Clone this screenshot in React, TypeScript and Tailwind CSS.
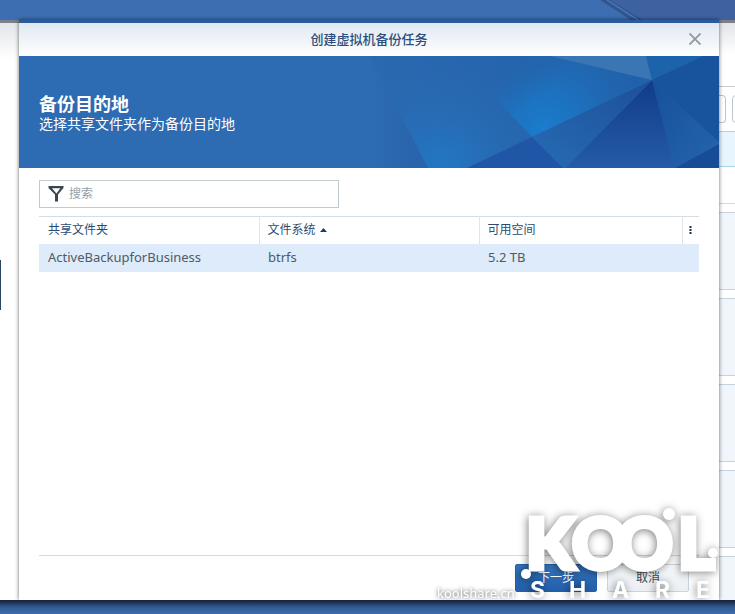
const folders = [{ name: 'ActiveBackupforBusiness', fs: 'btrfs', free: '5.2 TB' }]

const cards = [1, 2, 3, 4]

const DesktopBar: React.FC = () => {
    return (
        <div className="relative h-5 bg-[#3c6eb1]">
            <svg
                className="absolute top-0 right-0"
                width="135"
                height="20"
                viewBox="0 0 135 20"
                aria-hidden="true"
            >
                <path d="M10 0H135V20H43Z" fill="#3d629f" />
                <path d="M0 0H10L43 20H31Z" fill="#30558f" />
                <path d="M7 0L38 20" stroke="#4a74b0" strokeWidth="1.5" />
            </svg>
        </div>
    )
}

const SideWindow: React.FC = () => {
    return (
        <div className="flex w-4 shrink-0 flex-col overflow-hidden border-t-[3px] border-[#7b7f88] bg-white">
            <div className="h-16 border-b border-[#c9cdd1] bg-linear-to-b from-[#e2e5e9] via-white to-white" />
            <div className="mt-2 flex h-7 gap-[6px]">
                <div className="w-[7px] shrink-0 rounded-r-sm border border-l-0 border-[#bcc6cd]" />
                <div className="w-5 shrink-0 rounded-l-sm border border-[#bcc6cd]" />
            </div>
            <div className="mt-2 h-9 border-y border-[#abd5ee] bg-[#e6f5fe]" />
            <div className="h-[37px] border-b border-[#d5dade]" />
            <div className="flex flex-1 flex-col gap-2 pt-2">
                {cards.map((card) => (
                    <div key={card} className="h-[78px] border-y border-[#c6d3de] bg-[#f0f6fc]" />
                ))}
                <div className="flex-1 border-t border-[#c6d3de] bg-[#f0f6fc]" />
            </div>
        </div>
    )
}

const BannerArt: React.FC = () => {
    return (
        <svg
            className="absolute top-0 right-0"
            width="350"
            height="112"
            viewBox="0 0 350 112"
            aria-hidden="true"
        >
            <defs>
                <linearGradient id="base" x1="0" y1="0" x2="1" y2="0">
                    <stop offset="0" stopColor="#2a69b0" />
                    <stop offset="1" stopColor="#2061ab" />
                </linearGradient>
                <linearGradient id="edge" x1="0" y1="0" x2="1" y2="0">
                    <stop offset="0" stopColor="#2d6bb2" />
                    <stop offset="1" stopColor="#2863ab" />
                </linearGradient>
                <radialGradient id="corner" gradientUnits="userSpaceOnUse" cx="72" cy="112" r="110">
                    <stop offset="0" stopColor="#2278c4" />
                    <stop offset="1" stopColor="#2a69b0" stopOpacity="0" />
                </radialGradient>
                <radialGradient id="glow" gradientUnits="userSpaceOnUse" cx="175" cy="74" r="105">
                    <stop offset="0" stopColor="#1a7dcc" />
                    <stop offset="0.4" stopColor="#1c74c2" stopOpacity="0.8" />
                    <stop offset="1" stopColor="#2366ae" stopOpacity="0" />
                </radialGradient>
                <linearGradient id="glowFade" gradientUnits="userSpaceOnUse" x1="120" y1="25" x2="145" y2="60">
                    <stop offset="0" stopColor="#000" />
                    <stop offset="1" stopColor="#fff" />
                </linearGradient>
                <mask id="glowMask">
                    <rect width="350" height="112" fill="url(#glowFade)" />
                </mask>
                <linearGradient id="dark" x1="0" y1="0" x2="0" y2="1">
                    <stop offset="0" stopColor="#103c88" />
                    <stop offset="1" stopColor="#255ba8" />
                </linearGradient>
                <linearGradient id="fold" x1="0" y1="1" x2="1" y2="0">
                    <stop offset="0" stopColor="#266cb5" />
                    <stop offset="1" stopColor="#1d4f98" />
                </linearGradient>
                <linearGradient id="right" x1="0" y1="0" x2="1" y2="1">
                    <stop offset="0" stopColor="#17509a" />
                    <stop offset="1" stopColor="#2465ae" />
                </linearGradient>
            </defs>
            <path d="M0 0H1L59 112H0Z" fill="url(#edge)" />
            <path d="M1 0H181L283 24L163 81L98 112H59Z" fill="url(#base)" />
            <path d="M1 0H181L283 24L163 81L98 112H59Z" fill="url(#corner)" />
            <path d="M85 0H181L283 24L163 81Z" fill="url(#glow)" mask="url(#glowMask)" />
            <path d="M181 0H277L283 24Z" fill="#3a76b3" />
            <path d="M277 0H334L283 24Z" fill="#1c63ac" />
            <path d="M334 0H350V88L283 24Z" fill="#18549d" />
            <path d="M283 24L350 86V88L306 112Z" fill="url(#right)" />
            <path d="M350 88V112H306Z" fill="#164d96" />
            <path d="M283 24L306 112H196Z" fill="url(#dark)" />
            <path d="M283 24L196 112H194L163 81Z" fill="url(#fold)" />
            <path d="M163 81L194 112H98Z" fill="#1f57a6" />
        </svg>
    )
}

const FolderTable: React.FC = () => {
    return (
        <table className="mt-2 w-full table-fixed border-t border-[#d3dde3] text-left">
            <thead>
                <tr className="h-[27px] text-xs text-[#2b4c72]">
                    <th className="w-[220px] pl-[9px] font-normal">共享文件夹</th>
                    <th className="w-[220px] border-l border-[#dde5ea] pl-2 font-normal">
                        <span className="flex items-center gap-1">
                            文件系统
                            <svg width="7" height="4" viewBox="0 0 7 4" aria-hidden="true">
                                <path d="M3.5 0L7 4H0Z" fill="#1d3f66" />
                            </svg>
                        </span>
                    </th>
                    <th className="border-l border-[#dde5ea] pl-2 font-normal">可用空间</th>
                    <th className="w-[17px] border-l border-[#dde5ea]">
                        <button className="flex w-full justify-center" aria-label="列">
                            <svg width="3" height="8" viewBox="0 0 3 8" aria-hidden="true">
                                <path d="M0.5 0H2.5V2H0.5ZM0.5 3H2.5V5H0.5ZM0.5 6H2.5V8H0.5Z" fill="#1d2f45" />
                            </svg>
                        </button>
                    </th>
                </tr>
            </thead>
            <tbody>
                {folders.map((folder) => (
                    <tr key={folder.name} className="h-7 bg-[#deebfa] text-[13px] text-[#505a64]">
                        <td className="pl-[9px]">{folder.name}</td>
                        <td className="pl-[9px]">{folder.fs}</td>
                        <td className="pl-[9px]" colSpan={2}>
                            {folder.free}
                        </td>
                    </tr>
                ))}
            </tbody>
        </table>
    )
}

const Watermark: React.FC = () => {
    return (
        <svg
            className="pointer-events-none absolute right-0 bottom-0"
            width="290"
            height="100"
            viewBox="0 0 290 100"
            aria-hidden="true"
        >
            <g className="drop-shadow-[-1px_1px_4px_rgba(0,0,0,0.5)]" fill="#fff">
                <text
                    x="97 143 187 249"
                    y="69"
                    fontFamily="Lato, sans-serif"
                    fontSize="70"
                    fontWeight="900"
                    stroke="#fff"
                    strokeWidth="5"
                >
                    KOOL
                </text>
                <circle cx="240" cy="14" r="6" />
                <circle cx="97" cy="74" r="5" />
                <circle cx="284" cy="53" r="5" />
                <text
                    x="101 140 183 226 267"
                    y="98"
                    fontFamily="Inter, sans-serif"
                    fontSize="23"
                    fontWeight="700"
                >
                    SHARE
                </text>
            </g>
            <text
                className="drop-shadow-[0_0_2px_rgba(0,0,0,0.7)]"
                x="8"
                y="98"
                fill="#fff"
                fontFamily="'Noto Sans', sans-serif"
                fontSize="13"
            >
                koolshare.cn
            </text>
        </svg>
    )
}

const Dialog: React.FC = () => {
    return (
        <section
            className="relative z-10 flex min-w-0 flex-1 flex-col border-t-[3px] border-[#2a5b9b] bg-white shadow-[0_0_4px_rgba(0,0,0,0.6)]"
            role="dialog"
            aria-labelledby="dialog-title"
        >
            <div className="relative flex h-[33px] items-center justify-center bg-linear-to-b from-[#dfe8f0] to-white">
                <h1 id="dialog-title" className="text-[13px] font-medium text-[#2a4f7c]">
                    创建虚拟机备份任务
                </h1>
                <button className="absolute top-[10px] right-[18px]" aria-label="关闭">
                    <svg width="12" height="12" viewBox="0 0 12 12" aria-hidden="true">
                        <path d="M0.5 0.5L11.5 11.5M11.5 0.5L0.5 11.5" stroke="#8d98a3" strokeWidth="1.8" />
                    </svg>
                </button>
            </div>

            <header className="relative flex h-28 flex-col justify-center bg-[#2d6bb2] px-5 pt-1 text-white">
                <BannerArt />
                <h2 className="relative text-lg leading-5 font-bold">备份目的地</h2>
                <p className="relative text-sm leading-5">选择共享文件夹作为备份目的地</p>
            </header>

            <div className="flex-1 px-5 pt-3">
                <label className="flex h-7 max-w-[300px] items-center gap-[5px] border border-[#bfc9ce] pl-2">
                    <svg width="16" height="16" viewBox="0 0 16 16" aria-hidden="true">
                        <path
                            d="M0.5 0H15.5V2L10 8.5V15.5H7V8.5L0.5 2ZM4 2.2L8.4 7.4L12.4 2.2Z"
                            fill="#3b464e"
                            fillRule="evenodd"
                        />
                    </svg>
                    <input
                        className="min-w-0 flex-1 text-xs text-[#505a64] outline-none placeholder:text-[#98a0a8]"
                        type="text"
                        placeholder="搜索"
                        aria-label="搜索"
                    />
                </label>
                <FolderTable />
            </div>

            <footer className="mx-5 flex justify-end gap-[10px] border-t border-[#d6d9dc] px-[10px] py-2 text-xs">
                <button className="h-7 w-[82px] rounded-xs border border-[#2460a8] bg-linear-to-b from-[#3474bd] to-[#2460ac] text-white">
                    下一步
                </button>
                <button className="h-7 w-[82px] rounded-xs border border-[#ccd5dc] bg-linear-to-b from-[#f8fafc] to-[#eaeff4] text-[#414b55]">
                    取消
                </button>
            </footer>

            <Watermark />
        </section>
    )
}

export default function App() {
    return (
        <main className="flex min-h-screen flex-col overflow-hidden bg-[#3c6eb1] font-['Noto_Sans','Noto_Sans_CJK_SC',sans-serif]">
            <DesktopBar />
            <div className="flex flex-1">
                <div className="w-[19px] shrink-0 border-t-[3px] border-[#7b7f88] bg-linear-to-b from-[#e2e5e9] to-white to-[36px]">
                    <div className="mt-[237px] h-[50px] w-px bg-[#2c4560]" />
                </div>
                <Dialog />
                <SideWindow />
            </div>
            <div className="relative z-20 h-[14px] bg-linear-to-b from-[#14213a] via-[#31598f] to-[#3d6cb0]" />
        </main>
    )
}
